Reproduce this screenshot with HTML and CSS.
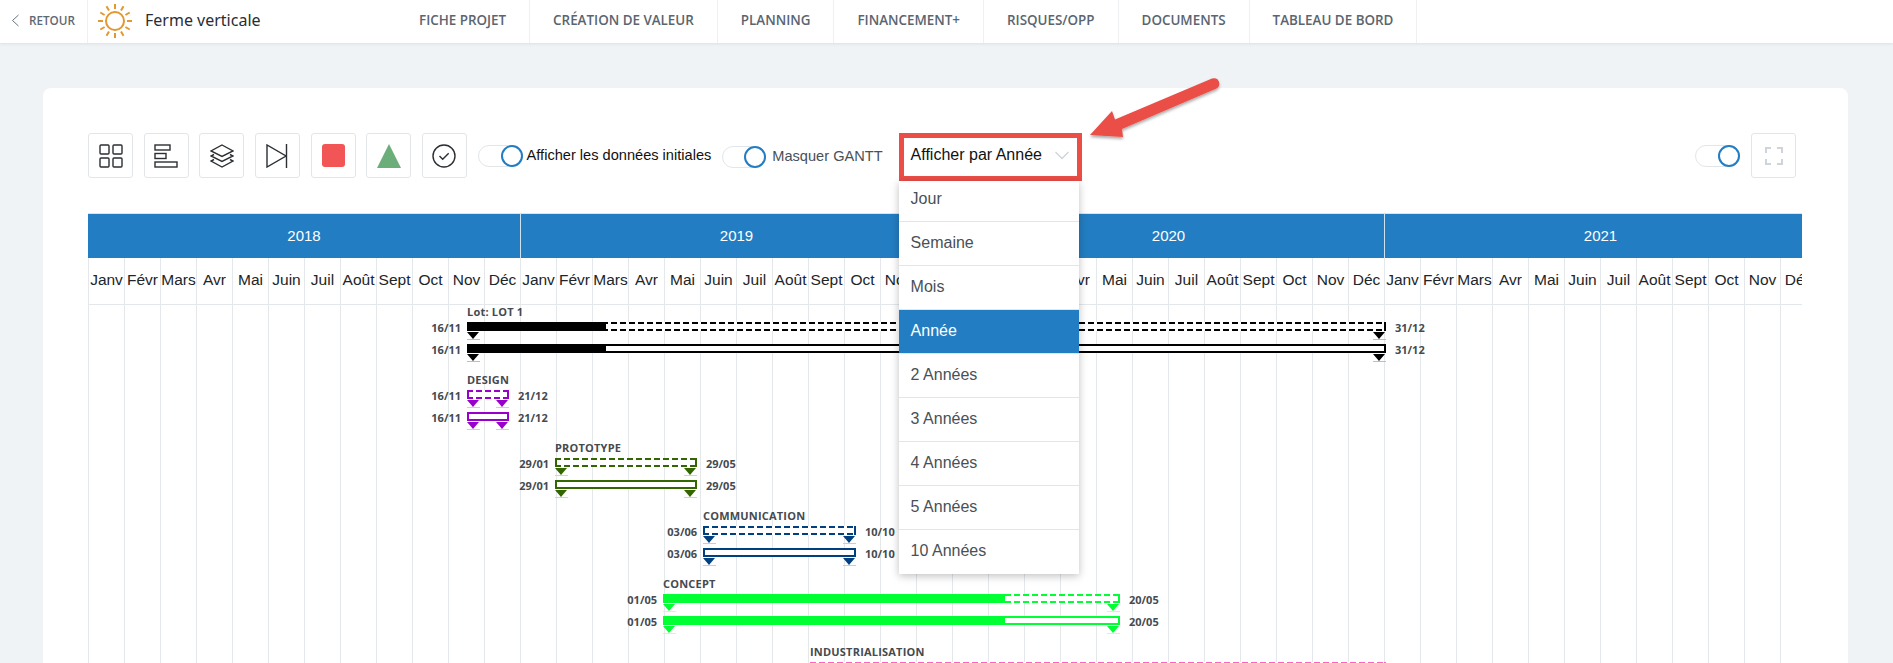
FILE: index.html
```html
<!DOCTYPE html>
<html lang="fr">
<head>
<meta charset="utf-8">
<title>Ferme verticale</title>
<link rel="stylesheet" href="styles.css">
</head>
<body>
<header class="topbar">
  <a class="back"><svg class="back-ico" width="9" height="13" viewBox="0 0 9 13"><path d="M7.500 1 1.500 6.500l6 5.500" fill="none" stroke="#6b747c" stroke-width="1"/></svg><span>RETOUR</span></a>
  <div class="brand">
    <svg class="sun" width="36" height="36" viewBox="0 0 36 36" fill="none" stroke="#e2982f" stroke-width="2">
      <circle cx="18" cy="18" r="9"/>
      <path d="M18 1v5M26.500 3.300 24 7.600M32.700 9.500 28.400 12M35 18h-5M32.700 26.500 28.400 24M26.500 32.700 24 28.400M18 35v-5M9.500 32.700 12 28.400M3.300 26.500 7.600 24M1 18h5M3.300 9.500 7.600 12M9.500 3.300 12 7.600"/>
    </svg>
    <span class="brand-name">Ferme verticale</span>
  </div>
  <nav class="nav">
    <a class="nav-item">FICHE PROJET</a>
    <a class="nav-item">CRÉATION DE VALEUR</a>
    <a class="nav-item">PLANNING</a>
    <a class="nav-item">FINANCEMENT+</a>
    <a class="nav-item">RISQUES/OPP</a>
    <a class="nav-item">DOCUMENTS</a>
    <a class="nav-item">TABLEAU DE BORD</a>
  </nav>
</header>

<main class="card">
  <div class="toolbar">
    <button class="tool"><svg width="24" height="24" viewBox="0 0 24 24" fill="none" stroke="#2b2f33" stroke-width="1.400"><rect x="1" y="1" width="9" height="9" rx="1"/><rect x="14" y="1" width="9" height="9" rx="1"/><rect x="1" y="14" width="9" height="9" rx="1"/><rect x="14" y="14" width="9" height="9" rx="1"/></svg></button>
    <button class="tool"><svg width="24" height="24" viewBox="0 0 24 24" fill="none" stroke="#2b2f33" stroke-width="1.400"><rect x="1" y="1" width="15" height="5"/><rect x="1" y="9.500" width="11" height="5"/><rect x="1" y="18" width="22" height="5"/></svg></button>
    <button class="tool"><svg width="24" height="24" viewBox="0 0 24 24" fill="none" stroke="#2b2f33" stroke-width="1.400"><path d="M12 1 23 7l-11 5.500L1 7z"/><path d="M4 10.500 1 12l11 5.500L23 12l-3-1.500"/><path d="M4 15.500 1 17l11 6 11-6-3-1.500"/></svg></button>
    <button class="tool"><svg width="22" height="24" viewBox="0 0 22 24" fill="none" stroke="#2b2f33" stroke-width="1.400"><path d="M1 1v22l19-11zM20.500 0v24"/></svg></button>
    <button class="tool"><span class="sq"></span></button>
    <button class="tool"><svg width="24" height="24" viewBox="0 0 24 24"><path d="M12 0 24 24H0z" fill="#6bae7a"/></svg></button>
    <button class="tool"><svg width="24" height="24" viewBox="0 0 24 24" fill="none" stroke="#2b2f33" stroke-width="1.400"><circle cx="12" cy="12" r="11"/><path d="m7.500 12 3.200 3.200 6-6"/></svg></button>
    <span class="switch"><span class="knob"></span></span>
    <span class="sw-label strong">Afficher les données initiales</span>
    <span class="switch small"><span class="knob"></span></span>
    <span class="sw-label muted">Masquer GANTT</span>
    <div class="select-wrap">
      <div class="select"><span>Afficher par Année</span><svg width="16" height="9" viewBox="0 0 16 9"><path d="m1.500 1 6.500 6.500L14.500 1" fill="none" stroke="#ced4da" stroke-width="1.300"/></svg></div>
      <ul class="menu">
        <li class="menu-item">Jour</li>
        <li class="menu-item">Semaine</li>
        <li class="menu-item">Mois</li>
        <li class="menu-item active">Année</li>
        <li class="menu-item">2 Années</li>
        <li class="menu-item">3 Années</li>
        <li class="menu-item">4 Années</li>
        <li class="menu-item">5 Années</li>
        <li class="menu-item">10 Années</li>
      </ul>
      <svg class="arrow" width="140" height="75" viewBox="0 0 140 75"><defs><filter id="sh" x="-20%" y="-20%" width="140%" height="150%"><feDropShadow dx="0" dy="2" stdDeviation="1.500" flood-color="#000" flood-opacity=".35"/></filter></defs><path d="M5 65 27 41l3 8.500L127 8.500a5.500 5.500 0 0 1 4.500 10L37 59l1 8z" fill="#eb4d47" filter="url(#sh)"/></svg>
    </div>
    <span class="switch right"><span class="knob"></span></span>
    <button class="tool fs"><svg width="18" height="18" viewBox="0 0 18 18" fill="none" stroke="#ced4da" stroke-width="2"><path d="M1 6V1h5M12 1h5v5M17 12v5h-5M6 17H1v-5"/></svg></button>
  </div>

  <section class="gantt">
    <div class="years">
      <div class="year">2018</div><div class="year">2019</div><div class="year">2020</div><div class="year">2021</div>
    </div>
    <div class="months">
      <span class="month">Janv</span><span class="month">Févr</span><span class="month">Mars</span><span class="month">Avr</span><span class="month">Mai</span><span class="month">Juin</span><span class="month">Juil</span><span class="month">Août</span><span class="month">Sept</span><span class="month">Oct</span><span class="month">Nov</span><span class="month">Déc</span>
      <span class="month">Janv</span><span class="month">Févr</span><span class="month">Mars</span><span class="month">Avr</span><span class="month">Mai</span><span class="month">Juin</span><span class="month">Juil</span><span class="month">Août</span><span class="month">Sept</span><span class="month">Oct</span><span class="month">Nov</span><span class="month">Déc</span>
      <span class="month">Janv</span><span class="month">Févr</span><span class="month">Mars</span><span class="month">Avr</span><span class="month">Mai</span><span class="month">Juin</span><span class="month">Juil</span><span class="month">Août</span><span class="month">Sept</span><span class="month">Oct</span><span class="month">Nov</span><span class="month">Déc</span>
      <span class="month">Janv</span><span class="month">Févr</span><span class="month">Mars</span><span class="month">Avr</span><span class="month">Mai</span><span class="month">Juin</span><span class="month">Juil</span><span class="month">Août</span><span class="month">Sept</span><span class="month">Oct</span><span class="month">Nov</span><span class="month">Déc</span>
    </div>
    <div class="chart">
      <div class="task black" style="margin-left:379px;width:919px">
        <div class="task-label">Lot: LOT 1</div>
        <div class="bar-row"><span class="date start">16/11</span><div class="bar dashed"><i class="fill" style="width:139px"></i></div><span class="date end">31/12</span><b class="tri left"></b><b class="tri right"></b></div>
        <div class="bar-row"><span class="date start">16/11</span><div class="bar"><i class="fill" style="width:139px"></i></div><span class="date end">31/12</span><b class="tri left"></b><b class="tri right"></b></div>
      </div>
      <div class="task purple" style="margin-left:379px;width:42px">
        <div class="task-label">DESIGN</div>
        <div class="bar-row"><span class="date start">16/11</span><div class="bar dashed"></div><span class="date end">21/12</span><b class="tri left"></b><b class="tri right"></b></div>
        <div class="bar-row"><span class="date start">16/11</span><div class="bar"></div><span class="date end">21/12</span><b class="tri left"></b><b class="tri right"></b></div>
      </div>
      <div class="task green" style="margin-left:467px;width:142px">
        <div class="task-label">PROTOTYPE</div>
        <div class="bar-row"><span class="date start">29/01</span><div class="bar dashed"></div><span class="date end">29/05</span><b class="tri left"></b><b class="tri right"></b></div>
        <div class="bar-row"><span class="date start">29/01</span><div class="bar"></div><span class="date end">29/05</span><b class="tri left"></b><b class="tri right"></b></div>
      </div>
      <div class="task navy" style="margin-left:615px;width:153px">
        <div class="task-label">COMMUNICATION</div>
        <div class="bar-row"><span class="date start">03/06</span><div class="bar dashed"></div><span class="date end">10/10</span><b class="tri left"></b><b class="tri right"></b></div>
        <div class="bar-row"><span class="date start">03/06</span><div class="bar"></div><span class="date end">10/10</span><b class="tri left"></b><b class="tri right"></b></div>
      </div>
      <div class="task lime" style="margin-left:575px;width:457px">
        <div class="task-label">CONCEPT</div>
        <div class="bar-row"><span class="date start">01/05</span><div class="bar dashed"><i class="fill" style="width:342px"></i></div><span class="date end">20/05</span><b class="tri left"></b><b class="tri right"></b></div>
        <div class="bar-row"><span class="date start">01/05</span><div class="bar"><i class="fill" style="width:342px"></i></div><span class="date end">20/05</span><b class="tri left"></b><b class="tri right"></b></div>
      </div>
      <div class="task pink" style="margin-left:722px;width:576px">
        <div class="task-label">INDUSTRIALISATION</div>
        <div class="bar-row"><div class="bar dashed"></div></div>
      </div>
    </div>
  </section>
</main>
</body>
</html>
```
FILE: styles.css
```css
* { box-sizing: border-box; }
html, body { margin: 0; height: 663px; overflow: hidden; }
body { background: #f0f3f6; font-family: "Liberation Sans", Arial, sans-serif; color: #212529; }

.topbar { display: flex; height: 43px; background: #fff; box-shadow: 0 1px 3px rgba(0,0,0,.08); align-items: stretch; }
.back { width: 88px; display: flex; align-items: center; gap: 9px; padding: 0 0 3px 11px; border-right: 1px solid #eef0f2; font: 600 11.700px "Open Sans", sans-serif; color: #5f6871; }
.brand { width: 331px; display: flex; align-items: center; gap: 12px; padding-left: 9px; }
.sun { flex: none; margin-top: -1px; }
.brand-name { padding-bottom: 3px; font: 400 16px "Noto Sans", "Open Sans", sans-serif; color: #2a2e33; }
.nav { display: flex; }
.nav-item { display: flex; align-items: center; padding: 0 23px 3px 23px; border-right: 1px solid #eef0f2; font: 600 13.400px "Open Sans", sans-serif; color: #5a6570; white-space: nowrap; }
.nav-item:first-child { padding-left: 0; }

.card { margin: 45px 45px 0 43px; height: 700px; background: #fff; border-radius: 8px; padding: 45px 46px 0 45px; }

.toolbar { display: flex; align-items: center; height: 45px; padding-right: 6px; }
.tool { width: 45px; height: 45px; flex: none; margin-right: 10.670px; padding: 0; background: #fff; border: 1px solid #e3e6e9; border-radius: 3px; display: flex; align-items: center; justify-content: center; }
.sq { display: block; width: 23px; height: 23px; border-radius: 3px; background: #f25555; }
.switch { flex: none; position: relative; display: block; width: 45px; height: 22px; border: 1px solid #e3e6e9; border-radius: 12px; background: #fff; }
.switch.small { width: 44px; margin: 2px 0 0 11px; }
.knob { position: absolute; right: -1px; top: -1px; width: 22px; height: 22px; border: 2.500px solid #237dc2; border-radius: 50%; background: #fff; }
.sw-label { font-size: 14.600px; white-space: nowrap; }
.strong { color: #111; margin: 0 0 2px 4px; }
.muted { color: #495057; margin-left: 6px; }
.select-wrap { position: relative; width: 183px; height: 48px; margin-left: 16px; flex: none; top: 1.500px; }
.select { display: flex; align-items: center; justify-content: space-between; height: 48px; padding: 0 7px 4px 7px; border: 5px solid #eb4d47; background: #fff; font-size: 16px; color: #111; }
.menu { position: absolute; z-index: 5; top: 48px; left: 0; width: 180px; margin: 0; padding: 0; list-style: none; background: #fff; box-shadow: 0 2px 8px rgba(0,0,0,.25); }
.menu-item { height: 44px; display: flex; align-items: center; padding: 0 12px 2px; font-size: 16px; color: #495057; border-bottom: 1px solid #e3e6e9; }
.menu-item:first-child { height: 41px; padding-bottom: 4px; }
.menu-item:last-child { border-bottom: 0; }
.menu-item.active { background: #237dc2; color: #fff; }
.arrow { position: absolute; z-index: 6; left: 186px; top: -63px; overflow: visible; }
.switch.right { margin-left: auto; margin-right: 11px; }
.tool.fs { margin-right: 0; }

.gantt { margin-top: 35px; width: 1714px; overflow: hidden; }
.years { display: flex; height: 45px; background: #237dc2; border-top: 1px solid #dfe3e6; }
.year { flex: none; width: 432px; display: flex; align-items: center; justify-content: center; padding-bottom: 2px; color: #fff; font-size: 15px; border-left: 1px solid #cfe2f1; }
.year:first-child { border-left: 0; }
.months { display: flex; height: 47px; border-bottom: 1px solid #e4e8eb; }
.month { flex: none; width: 36px; border-left: 1px solid #e4e8eb; display: flex; align-items: center; justify-content: center; overflow: hidden; white-space: nowrap; font-size: 15.500px; padding-bottom: 3px; color: #212529; }
.chart { height: 400px; background-image: repeating-linear-gradient(to right, #e4e8eb 0, #e4e8eb 1px, transparent 1px, transparent 36px); }

.task { height: 68px; }
.task-label { height: 14px; font: 700 11px/14px "Open Sans", sans-serif; color: #454a50; letter-spacing: .2px; white-space: nowrap; margin-bottom: 3px; }
.bar-row { position: relative; height: 22px; }
.bar { position: relative; height: 9px; border: 2px solid var(--c); background: #fff; }
.bar.dashed {
  border-color: transparent;
  background:
    repeating-linear-gradient(to right, var(--c) 0, var(--c) 6px, transparent 6px, transparent 9px) 0 0 / 100% 2px no-repeat border-box,
    repeating-linear-gradient(to right, var(--c) 0, var(--c) 6px, transparent 6px, transparent 9px) 0 100% / 100% 2px no-repeat border-box,
    linear-gradient(var(--c), var(--c)) 0 0 / 2px 100% no-repeat border-box,
    linear-gradient(var(--c), var(--c)) 100% 0 / 2px 100% no-repeat border-box,
    #fff;
}
.fill { position: absolute; left: -2px; top: -2px; bottom: -2px; background: var(--c); }
.date { position: absolute; top: 0; font: 700 11px/12px "Open Sans", sans-serif; color: #454a50; white-space: nowrap; }
.date.start { right: calc(100% + 6px); }
.date.end { left: calc(100% + 9px); }
.tri { position: absolute; top: 10px; width: 13px; height: 8px; border-bottom: 1px solid color-mix(in srgb, var(--c) 25%, white); }
.tri::before { content: ""; position: absolute; left: 0; top: 0; border-style: solid; border-width: 7px 6.500px 0 6.500px; border-color: var(--c) transparent transparent transparent; }
.tri.left { left: 0; }
.tri.right { right: 0; }

.black { --c: #000; }
.purple { --c: #9a00cc; }
.green { --c: #336600; }
.navy { --c: #004080; }
.lime { --c: #00ff33; }
.pink { --c: #ff5fc8; }
```
